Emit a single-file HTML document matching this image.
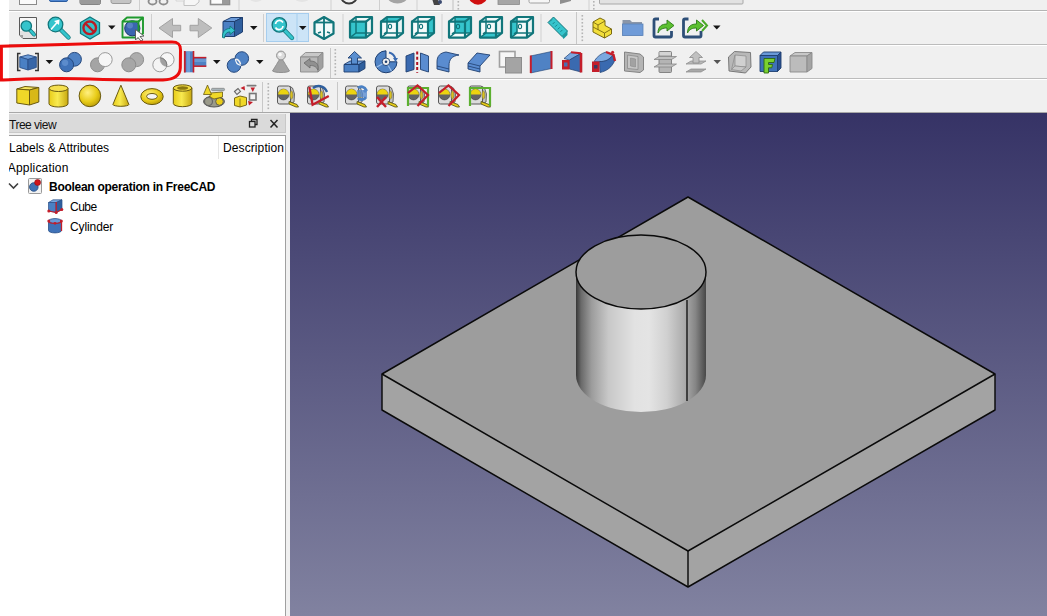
<!DOCTYPE html>
<html><head><meta charset="utf-8">
<style>
html,body{margin:0;padding:0;}
body{width:1047px;height:616px;overflow:hidden;position:relative;background:#ffffff;font-family:"Liberation Sans",sans-serif;}
.abs{position:absolute;}
#tb{position:absolute;left:9px;top:0;width:1038px;height:113px;background:#f0f0f0;}
.hl{position:absolute;left:0;width:1038px;height:1px;}
.vs{position:absolute;width:1px;background:#d0d0d0;}
.ic{position:absolute;}
.dd{position:absolute;width:0;height:0;border-left:4px solid transparent;border-right:4px solid transparent;border-top:4px solid #1a1a1a;}
.hd{position:absolute;width:2px;}
#view{position:absolute;left:290px;top:113px;width:757px;height:503px;background:linear-gradient(#363366,#8182a0);}
.tx{position:absolute;white-space:nowrap;color:#000;}
</style></head><body>
<div id="tb">
  <div class="hl" style="top:10px;background:#b4b4b4"></div>
  <div class="hl" style="top:11px;background:#ffffff"></div>
  <div class="hl" style="top:44px;background:#bcbcbc"></div>
  <div class="hl" style="top:45px;background:#ffffff"></div>
  <div class="hl" style="top:78px;background:#bcbcbc"></div>
  <div class="hl" style="top:79px;background:#ffffff"></div>
  <div class="hl" style="top:112px;background:#a8a8a8"></div>
</div>

<svg class="abs" style="left:0;top:0" width="1047" height="113" viewBox="0 0 1047 113"><rect x="19.5" y="-14" width="17" height="18.5" fill="#fafafa" stroke="#8a8a8a" stroke-width="1"/><rect x="49.5" y="-14" width="18" height="15.5" rx="1.5" fill="#4f86d0" stroke="#2a5ca0" stroke-width="1"/><rect x="80" y="-14" width="20.5" height="18.5" rx="2" fill="#909090" stroke="#6e6e6e" stroke-width="1"/><rect x="80" y="-4" width="20.5" height="8.5" rx="2" fill="#9a9a9a"/><rect x="111" y="-14" width="20" height="17.5" rx="2" fill="#c4c4c4" stroke="#9a9a9a" stroke-width="1"/><rect x="139" y="0" width="1" height="10" fill="#cfcfcf"/><ellipse cx="152.5" cy="1.5" rx="4" ry="3" fill="none" stroke="#8c8c8c" stroke-width="1.8"/><ellipse cx="163.5" cy="1.5" rx="4" ry="3" fill="none" stroke="#8c8c8c" stroke-width="1.8"/><polygon points="184,-12 199,-12 199,2 195,5.5 184,5.5" fill="#f6f6f6" stroke="#c2c2c2" stroke-width="1"/><polygon points="176,-6 184,-6 184,1 176,1" fill="#f2f2f2" stroke="#d0d0d0" stroke-width="0.8"/><rect x="210.5" y="-12" width="19" height="16.5" fill="#fbfbfb" stroke="#8e8e8e" stroke-width="1.6"/><rect x="222" y="-2" width="7" height="6" fill="#9a9a9a"/><rect x="238.5" y="0" width="1" height="10" fill="#cfcfcf"/><ellipse cx="256" cy="-3" rx="7" ry="5" fill="#e4e4e4"/><ellipse cx="302" cy="-3" rx="8" ry="5" fill="#e4e4e4"/><rect x="330.5" y="0" width="1" height="10" fill="#cfcfcf"/><circle cx="349" cy="-5" r="8.5" fill="none" stroke="#3a3a3a" stroke-width="1.8"/><rect x="379" y="0" width="1" height="10" fill="#cfcfcf"/><ellipse cx="397.5" cy="-3" rx="10" ry="6.5" fill="#a4a4a4"/><rect x="416.5" y="0" width="1" height="10" fill="#cfcfcf"/><polygon points="430,-8 437,-3 440,5 434,5" fill="#454545"/><circle cx="440" cy="2" r="2" fill="#3a4a70"/><rect x="452.5" y="0" width="1" height="10" fill="#c0c0c0"/><rect x="457.5" y="1" width="1.6" height="1.6" fill="#b4b4b4"/><rect x="457.5" y="4.5" width="1.6" height="1.6" fill="#b4b4b4"/><rect x="457.5" y="8.0" width="1.6" height="1.6" fill="#b4b4b4"/><circle cx="478" cy="-5" r="9.7" fill="#d01010"/><rect x="498" y="-14" width="21.5" height="18.5" fill="#a6a6a6" stroke="#8a8a8a" stroke-width="0.8"/><rect x="529" y="-14" width="20.5" height="17" rx="1.5" fill="#f6f6f6" stroke="#a0a0a0" stroke-width="1"/><polygon points="560,-10 571,-14 571,1 560,4" fill="#8e8e8e"/><rect x="588.5" y="0" width="1" height="10" fill="#cfcfcf"/><rect x="593" y="1" width="1.6" height="1.6" fill="#b4b4b4"/><rect x="593" y="4.5" width="1.6" height="1.6" fill="#b4b4b4"/><rect x="593" y="8.0" width="1.6" height="1.6" fill="#b4b4b4"/><rect x="599.5" y="-14" width="143.5" height="18" rx="1" fill="#e2e2e2" stroke="#a8a8a8" stroke-width="1"/><polygon points="19.5,17.5 36.5,17.5 36.5,38.5 23,38.5 19.5,35" fill="#f7f7f7" stroke="#5a5a5a" stroke-width="1"/><polygon points="20,31 36,31 36,38 23,38 20,35" fill="#e2e2e2"/><polygon points="19.5,35 23,35 23,38.5" fill="#a0a0a0"/><line x1="26.3" y1="26" x2="34" y2="34.5" stroke="#11767b" stroke-width="4.0" stroke-linecap="round"/><line x1="26.3" y1="26" x2="34" y2="34.5" stroke="#35c4cc" stroke-width="2.6" stroke-linecap="round"/><circle cx="26.3" cy="26" r="5.2" fill="#35c4cc" stroke="#11767b" stroke-width="1.3"/><line x1="55.5" y1="24.5" x2="68.5" y2="37.5" stroke="#11767b" stroke-width="4.4" stroke-linecap="round"/><line x1="55.5" y1="24.5" x2="68.5" y2="37.5" stroke="#35c4cc" stroke-width="3" stroke-linecap="round"/><circle cx="55.5" cy="24.5" r="7.3" fill="#35c4cc" stroke="#11767b" stroke-width="1.3"/><line x1="51" y1="29.5" x2="57.5" y2="22" stroke="#fff" stroke-width="1.6"/><polygon points="59.5,19.5 59,25 54,21" fill="#fff"/><polygon points="90.0,17.0 99.5,22.5 99.5,33.5 90.0,39.0 80.5,33.5 80.5,22.5" fill="#35c4cc" stroke="#11767b" stroke-width="1.3"/><circle cx="89.7" cy="27.8" r="6.3" fill="none" stroke="#b81c24" stroke-width="2.4"/><line x1="85.5" y1="23.5" x2="94" y2="32" stroke="#b81c24" stroke-width="2.4"/><polygon points="108,25.5 115.5,25.5 111.75,29.5" fill="#151515"/><circle cx="132.3" cy="28.3" r="7.6" fill="#3a66b0" stroke="#1c3a70" stroke-width="1"/><circle cx="130" cy="25.5" r="3" fill="#6a92d0" opacity="0.6"/><polygon points="122.5,21.5 138.5,21.5 138.5,37.5 122.5,37.5" fill="none" stroke="#1f9a2e" stroke-width="1.9" stroke-linejoin="round"/><polyline points="122.5,21.5 127,17.5 143,17.5 143,33.5 138.5,37.5" fill="none" stroke="#1f9a2e" stroke-width="1.9" stroke-linejoin="round"/><line x1="138.5" y1="21.5" x2="143" y2="17.5" stroke="#1f9a2e" stroke-width="1.9"/><polygon points="135.5,29.5 144,36 140,36.5 143,40 141,41 138,37.5 135.5,40" fill="#fff" stroke="#555" stroke-width="0.9"/><rect x="151" y="14" width="1" height="28" fill="#cfcfcf"/><polygon points="159,28 172.5,18.5 172.5,25.3 180.7,25.3 180.7,30.8 172.5,30.8 172.5,37.5" fill="#bdbdbd" stroke="#a2a2a2" stroke-width="1"/><polygon points="211.8,28 198.3,18.5 198.3,25.3 190,25.3 190,30.8 198.3,30.8 198.3,37.5" fill="#bdbdbd" stroke="#a2a2a2" stroke-width="1"/><polygon points="223,21.5 234.5,21.5 234.5,36.5 223,36.5" fill="#4a80c4" stroke="#1f3f70" stroke-width="1"/><polygon points="223,21.5 231,17.5 242.5,17.5 234.5,21.5" fill="#6a9ad8" stroke="#1f3f70" stroke-width="1"/><polygon points="234.5,21.5 242.5,17.5 242.5,32 234.5,36.5" fill="#2f5f9e" stroke="#1f3f70" stroke-width="1"/><path d="M222.5,37.5 C222,31 226,28.5 230,28.5 L230,26 L235,30.5 L230,34.5 L230,32 C227,32 225,33.5 224.5,38 Z" fill="#35c4cc" stroke="#11767b" stroke-width="0.9"/><polygon points="250,26 257.5,26 253.75,30" fill="#151515"/><rect x="263" y="14" width="1" height="28" fill="#cfcfcf"/><rect x="266.5" y="13.5" width="42" height="28" fill="#cce4f7" stroke="#a6cdee" stroke-width="1"/><rect x="296.5" y="14" width="1" height="27" fill="#a6cdee"/><line x1="279.3" y1="24.9" x2="292" y2="38" stroke="#11767b" stroke-width="4.4" stroke-linecap="round"/><line x1="279.3" y1="24.9" x2="292" y2="38" stroke="#35c4cc" stroke-width="3" stroke-linecap="round"/><circle cx="279.3" cy="24.9" r="7.2" fill="#35c4cc" stroke="#11767b" stroke-width="1.3"/><path d="M275.5,24 A4,4 0 0 1 283,22.5" fill="none" stroke="#fff" stroke-width="1.6"/><path d="M283,26 A4,4 0 0 1 275.5,27.5" fill="none" stroke="#fff" stroke-width="1.6"/><polygon points="299,26 306.5,26 302.75,30" fill="#151515"/><polygon points="324.0,17.0 333.5,22.5 333.5,33.5 324.0,39.0 314.5,33.5 314.5,22.5" fill="#f2fafa" stroke="#11767b" stroke-width="2.2" stroke-linejoin="round"/><polyline points="314.5,22.5 324.0,22.5 333.5,22.5" fill="none" stroke="#11767b" stroke-width="1.8"/><line x1="324" y1="17" x2="324" y2="39" stroke="#11767b" stroke-width="1.8"/><line x1="318" y1="33" x2="321" y2="32" stroke="#11767b" stroke-width="1.6"/><line x1="327" y1="32" x2="330" y2="33" stroke="#11767b" stroke-width="1.6"/><rect x="342.5" y="14" width="1" height="28" fill="#cfcfcf"/><polygon points="350.0,21.6 366.0,21.6 366.0,37.6 350.0,37.6" fill="#f4fbfb"/><polygon points="350.0,21.6 366.0,21.6 372.0,17.0 356.0,17.0" fill="#eef8f8"/><polygon points="366.0,21.6 372.0,17.0 372.0,33.0 366.0,37.6" fill="#e8f4f4"/><polygon points="350.0,21.6 366.0,21.6 366.0,37.6 350.0,37.6" fill="#35c4cc"/><polyline points="350.0,21.6 356.0,17.0 372.0,17.0 372.0,33.0 366.0,37.6" fill="none" stroke="#11767b" stroke-width="2.2" stroke-linejoin="round"/><polygon points="350.0,21.6 366.0,21.6 366.0,37.6 350.0,37.6" fill="none" stroke="#11767b" stroke-width="2.2" stroke-linejoin="round"/><line x1="366" y1="21.6" x2="372" y2="17.0" fill="none" stroke="#11767b" stroke-width="2.2" stroke-linejoin="round"/><polyline points="356,17.0 356,33.0 372,33.0" fill="none" stroke="#11767b" stroke-width="1.5"/><line x1="350" y1="37.6" x2="356" y2="33.0" fill="none" stroke="#11767b" stroke-width="1.5"/><polygon points="381.0,21.6 397.0,21.6 397.0,37.6 381.0,37.6" fill="#f4fbfb"/><polygon points="381.0,21.6 397.0,21.6 403.0,17.0 387.0,17.0" fill="#eef8f8"/><polygon points="397.0,21.6 403.0,17.0 403.0,33.0 397.0,37.6" fill="#e8f4f4"/><polygon points="381.0,21.6 397.0,21.6 403.0,17.0 387.0,17.0" fill="#35c4cc"/><polyline points="381.0,21.6 387.0,17.0 403.0,17.0 403.0,33.0 397.0,37.6" fill="none" stroke="#11767b" stroke-width="2.2" stroke-linejoin="round"/><polygon points="381.0,21.6 397.0,21.6 397.0,37.6 381.0,37.6" fill="none" stroke="#11767b" stroke-width="2.2" stroke-linejoin="round"/><line x1="397" y1="21.6" x2="403" y2="17.0" fill="none" stroke="#11767b" stroke-width="2.2" stroke-linejoin="round"/><polyline points="387,17.0 387,33.0 403,33.0" fill="none" stroke="#11767b" stroke-width="1.5"/><line x1="381" y1="37.6" x2="387" y2="33.0" fill="none" stroke="#11767b" stroke-width="1.5"/><line x1="384" y1="34" x2="387" y2="32" stroke="#11767b" stroke-width="1.6"/><ellipse cx="390" cy="26.5" rx="1.6" ry="2.2" fill="none" stroke="#11767b" stroke-width="1.1"/><polygon points="412.0,21.6 428.0,21.6 428.0,37.6 412.0,37.6" fill="#f4fbfb"/><polygon points="412.0,21.6 428.0,21.6 434.0,17.0 418.0,17.0" fill="#eef8f8"/><polygon points="428.0,21.6 434.0,17.0 434.0,33.0 428.0,37.6" fill="#e8f4f4"/><polygon points="428.0,21.6 434.0,17.0 434.0,33.0 428.0,37.6" fill="#35c4cc"/><polyline points="412.0,21.6 418.0,17.0 434.0,17.0 434.0,33.0 428.0,37.6" fill="none" stroke="#11767b" stroke-width="2.2" stroke-linejoin="round"/><polygon points="412.0,21.6 428.0,21.6 428.0,37.6 412.0,37.6" fill="none" stroke="#11767b" stroke-width="2.2" stroke-linejoin="round"/><line x1="428" y1="21.6" x2="434" y2="17.0" fill="none" stroke="#11767b" stroke-width="2.2" stroke-linejoin="round"/><polyline points="418,17.0 418,33.0 434,33.0" fill="none" stroke="#11767b" stroke-width="1.5"/><line x1="412" y1="37.6" x2="418" y2="33.0" fill="none" stroke="#11767b" stroke-width="1.5"/><line x1="415" y1="34" x2="418" y2="32" stroke="#11767b" stroke-width="1.6"/><ellipse cx="421" cy="26.5" rx="1.6" ry="2.2" fill="none" stroke="#11767b" stroke-width="1.1"/><rect x="441.5" y="14" width="1" height="28" fill="#cfcfcf"/><polygon points="449.0,21.6 465.0,21.6 465.0,37.6 449.0,37.6" fill="#f4fbfb"/><polygon points="449.0,21.6 465.0,21.6 471.0,17.0 455.0,17.0" fill="#eef8f8"/><polygon points="465.0,21.6 471.0,17.0 471.0,33.0 465.0,37.6" fill="#e8f4f4"/><polygon points="455.0,17.0 471.0,17.0 471.0,33.0 455.0,33.0" fill="#35c4cc"/><polyline points="449.0,21.6 455.0,17.0 471.0,17.0 471.0,33.0 465.0,37.6" fill="none" stroke="#11767b" stroke-width="2.2" stroke-linejoin="round"/><polygon points="449.0,21.6 465.0,21.6 465.0,37.6 449.0,37.6" fill="none" stroke="#11767b" stroke-width="2.2" stroke-linejoin="round"/><line x1="465" y1="21.6" x2="471" y2="17.0" fill="none" stroke="#11767b" stroke-width="2.2" stroke-linejoin="round"/><polyline points="455,17.0 455,33.0 471,33.0" fill="none" stroke="#11767b" stroke-width="1.5"/><line x1="449" y1="37.6" x2="455" y2="33.0" fill="none" stroke="#11767b" stroke-width="1.5"/><line x1="452" y1="34" x2="455" y2="32" stroke="#11767b" stroke-width="1.6"/><ellipse cx="458" cy="26.5" rx="1.6" ry="2.2" fill="none" stroke="#11767b" stroke-width="1.1"/><polygon points="480.0,21.6 496.0,21.6 496.0,37.6 480.0,37.6" fill="#f4fbfb"/><polygon points="480.0,21.6 496.0,21.6 502.0,17.0 486.0,17.0" fill="#eef8f8"/><polygon points="496.0,21.6 502.0,17.0 502.0,33.0 496.0,37.6" fill="#e8f4f4"/><polygon points="480.0,37.6 496.0,37.6 502.0,33.0 486.0,33.0" fill="#35c4cc"/><polyline points="480.0,21.6 486.0,17.0 502.0,17.0 502.0,33.0 496.0,37.6" fill="none" stroke="#11767b" stroke-width="2.2" stroke-linejoin="round"/><polygon points="480.0,21.6 496.0,21.6 496.0,37.6 480.0,37.6" fill="none" stroke="#11767b" stroke-width="2.2" stroke-linejoin="round"/><line x1="496" y1="21.6" x2="502" y2="17.0" fill="none" stroke="#11767b" stroke-width="2.2" stroke-linejoin="round"/><polyline points="486,17.0 486,33.0 502,33.0" fill="none" stroke="#11767b" stroke-width="1.5"/><line x1="480" y1="37.6" x2="486" y2="33.0" fill="none" stroke="#11767b" stroke-width="1.5"/><line x1="483" y1="34" x2="486" y2="32" stroke="#11767b" stroke-width="1.6"/><ellipse cx="489" cy="26.5" rx="1.6" ry="2.2" fill="none" stroke="#11767b" stroke-width="1.1"/><polygon points="511.0,21.6 527.0,21.6 527.0,37.6 511.0,37.6" fill="#f4fbfb"/><polygon points="511.0,21.6 527.0,21.6 533.0,17.0 517.0,17.0" fill="#eef8f8"/><polygon points="527.0,21.6 533.0,17.0 533.0,33.0 527.0,37.6" fill="#e8f4f4"/><polygon points="511.0,21.6 517.0,17.0 517.0,33.0 511.0,37.6" fill="#35c4cc"/><polyline points="511.0,21.6 517.0,17.0 533.0,17.0 533.0,33.0 527.0,37.6" fill="none" stroke="#11767b" stroke-width="2.2" stroke-linejoin="round"/><polygon points="511.0,21.6 527.0,21.6 527.0,37.6 511.0,37.6" fill="none" stroke="#11767b" stroke-width="2.2" stroke-linejoin="round"/><line x1="527" y1="21.6" x2="533" y2="17.0" fill="none" stroke="#11767b" stroke-width="2.2" stroke-linejoin="round"/><polyline points="517,17.0 517,33.0 533,33.0" fill="none" stroke="#11767b" stroke-width="1.5"/><line x1="511" y1="37.6" x2="517" y2="33.0" fill="none" stroke="#11767b" stroke-width="1.5"/><line x1="514" y1="34" x2="517" y2="32" stroke="#11767b" stroke-width="1.6"/><ellipse cx="520" cy="26.5" rx="1.6" ry="2.2" fill="none" stroke="#11767b" stroke-width="1.1"/><rect x="540.5" y="14" width="1" height="28" fill="#cfcfcf"/><polygon points="548,22.5 553.5,17 567.5,31 562,36.5" fill="#35c4cc" stroke="#11767b" stroke-width="1"/><polygon points="562,36.5 567.5,31 567.5,35 563.5,39" fill="#1a9aa0"/><line x1="552.0" y1="19.5" x2="550.0" y2="21.5" stroke="#11767b" stroke-width="0.8"/><line x1="554.6" y1="22.1" x2="552.6" y2="24.1" stroke="#11767b" stroke-width="0.8"/><line x1="557.2" y1="24.7" x2="555.2" y2="26.7" stroke="#11767b" stroke-width="0.8"/><line x1="559.8" y1="27.3" x2="557.8" y2="29.3" stroke="#11767b" stroke-width="0.8"/><line x1="562.4" y1="29.9" x2="560.4" y2="31.9" stroke="#11767b" stroke-width="0.8"/><rect x="576" y="12" width="1" height="32" fill="#c8c8c8"/><rect x="581.5" y="15" width="1.6" height="1.6" fill="#b4b4b4"/><rect x="581.5" y="18.5" width="1.6" height="1.6" fill="#b4b4b4"/><rect x="581.5" y="22.0" width="1.6" height="1.6" fill="#b4b4b4"/><rect x="581.5" y="25.5" width="1.6" height="1.6" fill="#b4b4b4"/><rect x="581.5" y="29.0" width="1.6" height="1.6" fill="#b4b4b4"/><rect x="581.5" y="32.5" width="1.6" height="1.6" fill="#b4b4b4"/><rect x="581.5" y="36.0" width="1.6" height="1.6" fill="#b4b4b4"/><rect x="581.5" y="39.5" width="1.6" height="1.6" fill="#b4b4b4"/><polygon points="593,22 600,18 605,20.5 605,25.5 611.5,29 611.5,34 604.5,38 593,32" fill="#f2de3a" stroke="#7a6a10" stroke-width="1"/><polyline points="593,27 604.5,33 611.5,29" fill="none" stroke="#7a6a10" stroke-width="0.9"/><polyline points="593,22 598,25 605,21" fill="none" stroke="#7a6a10" stroke-width="0.9"/><line x1="598" y1="25" x2="598" y2="30" stroke="#7a6a10" stroke-width="0.9"/><line x1="604.5" y1="33" x2="604.5" y2="38" stroke="#7a6a10" stroke-width="0.9"/><path d="M622.5,20 L630,20 L632,22 L642,22 L642,35.5 L622.5,35.5 Z" fill="#8a96a8"/><rect x="622.5" y="24" width="20.5" height="11.5" fill="#6f9bd8" stroke="#5a82b8" stroke-width="0.8"/><path d="M659,19 L655.5,19 Q654,19 654,20.5 L654,35.5 Q654,37 655.5,37 L670,37 Q671.5,37 671.5,35.5 L671.5,31" fill="none" stroke="#2e4f78" stroke-width="2.8"/><path d="M658,33 C658,26 662,24 667,24 L667,20 L674,25.5 L667,31 L667,28 C663,28 660,29 658,33 Z" fill="#5cc030" stroke="#2c7a18" stroke-width="0.9"/><path d="M688.5,19 L685.0,19 Q683.5,19 683.5,20.5 L683.5,35.5 Q683.5,37 685.0,37 L699.5,37 Q701.0,37 701.0,35.5 L701.0,31" fill="none" stroke="#2e4f78" stroke-width="2.8"/><path d="M687.5,33 C687.5,26 691.5,24 696.5,24 L696.5,20 L703.5,25.5 L696.5,31 L696.5,28 C692.5,28 689.5,29 687.5,33 Z" fill="#5cc030" stroke="#2c7a18" stroke-width="0.9"/><polyline points="702,20 707,25.5 702,31" fill="none" stroke="#4aaa28" stroke-width="2"/><polygon points="713,25.5 720.5,25.5 716.75,29.5" fill="#151515"/><polyline points="20.5,53.5 17.7,53.5 17.7,70.5 20.5,70.5" fill="none" stroke="#333" stroke-width="1.5"/><polyline points="35,53.5 38.2,53.5 38.2,70.5 35,70.5" fill="none" stroke="#333" stroke-width="1.5"/><polygon points="19.8,57 28,54.8 36.3,57 28,59.5" fill="#6c9cd8" stroke="#2a4f88" stroke-width="0.9"/><polygon points="19.8,57 28,59.5 28,70 19.8,67.5" fill="#4a80c4" stroke="#2a4f88" stroke-width="0.9"/><polygon points="28,59.5 36.3,57 36.3,67.5 28,70" fill="#3766a8" stroke="#2a4f88" stroke-width="0.9"/><polygon points="45.6,60 53.1,60 49.35,64" fill="#151515"/><circle cx="74.5" cy="59.3" r="6.9" fill="#4f82c4" stroke="#26497e" stroke-width="1"/><circle cx="66.6" cy="64.8" r="7" fill="#3f72b8" stroke="#26497e" stroke-width="1"/><circle cx="65.1" cy="62.8" r="3.15" fill="#7aa6e0" opacity="0.5"/><circle cx="97.5" cy="64.8" r="7" fill="#a4a4a4" stroke="#8c8c8c" stroke-width="1"/><circle cx="105.2" cy="59.6" r="7" fill="#f6f6f6" stroke="#9a9a9a" stroke-width="1"/><circle cx="136.6" cy="59.6" r="7" fill="#adadad" stroke="#8c8c8c" stroke-width="1"/><circle cx="128.8" cy="64.8" r="7" fill="#a6a6a6" stroke="#8c8c8c" stroke-width="1"/><circle cx="167.1" cy="59.6" r="7" fill="#f7f7f7" stroke="#9c9c9c" stroke-width="1"/><circle cx="159.8" cy="64.8" r="7" fill="#f7f7f7" fill-opacity="0.6" stroke="#9c9c9c" stroke-width="1"/><clipPath id="cpc"><circle cx="167.1" cy="59.6" r="7"/></clipPath><circle cx="159.8" cy="64.8" r="7" fill="#a0a0a0" clip-path="url(#cpc)" stroke="#7a7a7a" stroke-width="1"/><rect x="184" y="51.3" width="9.5" height="21" fill="#4f82c4"/><rect x="193.5" y="57.5" width="12.8" height="8.8" fill="#4f82c4"/><rect x="186.5" y="52" width="3.5" height="20" fill="#7aa8e0" opacity="0.7"/><rect x="194" y="59" width="12" height="3" fill="#7aa8e0" opacity="0.6"/><line x1="184.8" y1="51" x2="184.8" y2="72.5" stroke="#c41e2a" stroke-width="1.8"/><line x1="193.5" y1="51" x2="193.5" y2="72.5" stroke="#c41e2a" stroke-width="1.6"/><line x1="193.5" y1="57.6" x2="206.3" y2="57.6" stroke="#c41e2a" stroke-width="1.5"/><line x1="193.5" y1="66.2" x2="206.3" y2="66.2" stroke="#c41e2a" stroke-width="1.5"/><polygon points="213,60 220.5,60 216.75,64" fill="#151515"/><circle cx="241.8" cy="58.5" r="6.8" fill="#4f82c4" stroke="#26497e" stroke-width="1"/><circle cx="234" cy="65.5" r="6.8" fill="#4f82c4" stroke="#26497e" stroke-width="1"/><path d="M236.2,59 A6.8,6.8 0 0 1 240.5,64.6" fill="none" stroke="#f4f4f4" stroke-width="1.5"/><path d="M235.5,58.8 A6.8,6.8 0 0 0 240.8,65.5" fill="none" stroke="#f4f4f4" stroke-width="1.2"/><polygon points="256,60 263.5,60 259.75,64" fill="#151515"/><path d="M281,57 C284,62 287,67 289.5,71 C287,73 275,73 272.5,71 C275,67 278,62 281,57 Z" fill="#a4a4a4" stroke="#8a8a8a" stroke-width="0.9"/><circle cx="281" cy="55.5" r="4.4" fill="#dcdcdc" stroke="#8e8e8e" stroke-width="1"/><circle cx="280" cy="54.5" r="1.8" fill="#fafafa"/><polygon points="300.5,57 305.5,52.5 323,52.5 318,57" fill="#c8c8c8" stroke="#8a8a8a" stroke-width="0.9"/><polygon points="300.5,57 318,57 318,72 300.5,72" fill="#b8b8b8" stroke="#8a8a8a" stroke-width="0.9"/><polygon points="318,57 323,52.5 323,67.5 318,72" fill="#a0a0a0" stroke="#8a8a8a" stroke-width="0.9"/><path d="M304,63 L310,58.5 L310,61 C316,61 319,64 318,70 C316,66.5 314,65.5 310,65.5 L310,68 Z" fill="#909090" stroke="#6a6a6a" stroke-width="0.8"/><rect x="330" y="48" width="1" height="30" fill="#c8c8c8"/><rect x="334.5" y="49" width="1.6" height="1.6" fill="#b4b4b4"/><rect x="334.5" y="52.5" width="1.6" height="1.6" fill="#b4b4b4"/><rect x="334.5" y="56.0" width="1.6" height="1.6" fill="#b4b4b4"/><rect x="334.5" y="59.5" width="1.6" height="1.6" fill="#b4b4b4"/><rect x="334.5" y="63.0" width="1.6" height="1.6" fill="#b4b4b4"/><rect x="334.5" y="66.5" width="1.6" height="1.6" fill="#b4b4b4"/><rect x="334.5" y="70.0" width="1.6" height="1.6" fill="#b4b4b4"/><rect x="334.5" y="73.5" width="1.6" height="1.6" fill="#b4b4b4"/><polygon points="344,64.5 350,61 365,61 359,64.5" fill="#6c9cd8" stroke="#1f3f70" stroke-width="0.9"/><polygon points="344,64.5 359,64.5 359,72 344,72" fill="#4a80c4" stroke="#1f3f70" stroke-width="0.9"/><polygon points="359,64.5 365,61 365,68.5 359,72" fill="#2f5f9e" stroke="#1f3f70" stroke-width="0.9"/><polygon points="354.5,51.5 361.5,58 357.5,58 357.5,64 351.5,64 351.5,58 348,58" fill="#5a8fd0" stroke="#1f3f70" stroke-width="0.9"/><path d="M386,61.8 L397,61.8 A11,11 0 1 1 386,50.8 Z" fill="#4f82c4" stroke="#1f3f70" stroke-width="1"/><line x1="386" y1="61.8" x2="376.5" y2="67.3" stroke="#9cc0ec" stroke-width="1.2"/><line x1="386" y1="61.8" x2="391.5" y2="71.3" stroke="#9cc0ec" stroke-width="1.2"/><circle cx="386" cy="61.8" r="3.8" fill="#f0f0f0" stroke="#1f3f70" stroke-width="0.9"/><circle cx="386" cy="61.8" r="1.3" fill="#1f3f70"/><path d="M389,52.5 A9,9 0 0 1 395.5,59" fill="none" stroke="#3a6ab0" stroke-width="2"/><polygon points="393,58 398,58 395.5,62" fill="#3a6ab0"/><polygon points="406,56 414,53 414,69.5 406,72" fill="#3a6ab0" stroke="#1f3f70" stroke-width="0.9"/><polygon points="420.5,53 428.5,56 428.5,72 420.5,69.5" fill="#5a8cd0" stroke="#1f3f70" stroke-width="0.9"/><line x1="417.2" y1="51.5" x2="417.2" y2="73" stroke="#b01020" stroke-width="2" stroke-dasharray="3,2.2"/><path d="M437,62 C437,56 440,53 446,52 L459,55 C452,56 449,59 449,66 L449,72 L437,69 Z" fill="#5a8cd0" stroke="#1f3f70" stroke-width="0.9"/><line x1="437" y1="66" x2="449" y2="69" stroke="#1f3f70" stroke-width="0.8"/><path d="M468,63 L477,53 L490,55 L480,66 L480,72 L468,69 Z" fill="#5a8cd0" stroke="#1f3f70" stroke-width="0.9"/><line x1="468" y1="66" x2="480" y2="69" stroke="#1f3f70" stroke-width="0.8"/><line x1="480" y1="66" x2="468" y2="63" stroke="#1f3f70" stroke-width="0.8"/><rect x="499.5" y="51.5" width="15.5" height="15.5" fill="#f6f6f6" stroke="#a0a0a0" stroke-width="1.6"/><rect x="505.5" y="57.5" width="16" height="15.5" fill="#a4a4a4" stroke="#8c8c8c" stroke-width="1"/><polygon points="530.5,56 551.5,51.5 551.5,68.5 530.5,73" fill="#4f82c4" stroke="#1f3f70" stroke-width="0.6"/><line x1="530.8" y1="55.5" x2="530.8" y2="73" stroke="#c41e2a" stroke-width="2"/><line x1="551.5" y1="51" x2="551.5" y2="69" stroke="#c41e2a" stroke-width="2"/><polygon points="564,58.5 571,52.5 581,53.5 569.5,60" fill="#7aa8e0" stroke="#1f3f70" stroke-width="0.7"/><polygon points="569.5,60 581,53.5 581,72 569.5,69" fill="#3a6ab0" stroke="#1f3f70" stroke-width="0.7"/><polygon points="562,60 569.5,60 569.5,69.5 562,69.5" fill="#c41e2a"/><rect x="564" y="62.5" width="3.5" height="4" fill="#4a70b0"/><line x1="581" y1="53" x2="581" y2="72.5" stroke="#c41e2a" stroke-width="2.6"/><line x1="571" y1="52.2" x2="581" y2="53.2" stroke="#c41e2a" stroke-width="2"/><path d="M594,61.5 C597,56.5 601,53.5 606,52 L613,55 C610,59 606,62 599.5,61.5 Z" fill="#7aa8e0" stroke="#1f3f70" stroke-width="0.7"/><path d="M599.5,61.5 C606,62 610,59 613,55 L614.5,61 C612,67 607,71 600,72.5 Z" fill="#3a6ab0" stroke="#1f3f70" stroke-width="0.7"/><rect x="592" y="61.5" width="7.5" height="10.5" fill="#c41e2a"/><rect x="594" y="65" width="3.5" height="3.5" fill="#3a3a60"/><polyline points="606,52 613.5,55 615,61" fill="none" stroke="#c41e2a" stroke-width="2.4"/><circle cx="612.6" cy="52.3" r="1.5" fill="#c41e2a"/><polygon points="624.5,52 640,54 643.5,57 643.5,70 640,72.5 624.5,71" fill="#b4b4b4" stroke="#7a7a7a" stroke-width="0.9"/><polygon points="627.5,55 638,56.5 638,69.5 627.5,68.5" fill="#c6c6c6" stroke="#8a8a8a" stroke-width="0.8"/><polygon points="630.5,58 635.5,59 635.5,67 630.5,66" fill="#a2a2a2" stroke="#8a8a8a" stroke-width="0.6"/><rect x="659" y="51.5" width="12.5" height="21" rx="1" fill="#b4b4b4" stroke="#7a7a7a" stroke-width="0.9"/><rect x="659.5" y="52" width="11.5" height="3" fill="#d4d4d4"/><polygon points="654,59.5 659,56.5 676.5,56.5 671.5,59.5" fill="#c0c0c0" stroke="#808080" stroke-width="0.7"/><polygon points="654,67 659,64 676.5,64 671.5,67" fill="#c0c0c0" stroke="#808080" stroke-width="0.7"/><polygon points="686,72 691,69 706,69 701,72" fill="#a8a8a8" stroke="#8a8a8a" stroke-width="0.7"/><polygon points="686,64 691,61 706,61 701,64" fill="#b8b8b8" stroke="#8a8a8a" stroke-width="0.7"/><polygon points="696,51.5 702.5,57.5 699,57.5 699,63 693,63 693,57.5 689.5,57.5" fill="#c0c0c0" stroke="#8a8a8a" stroke-width="0.8"/><polygon points="713.5,60 721.0,60 717.25,64" fill="#555"/><polygon points="728.5,57 734.5,51.5 750.5,52.5 751,67 745.5,73 729,71" fill="#b8b8b8" stroke="#6e6e6e" stroke-width="0.9"/><polygon points="735,55 746,56 746,67 735,66" fill="#d0d0d0" stroke="#8a8a8a" stroke-width="0.7"/><polygon points="735,66 746,67 741,71 731.5,69.5" fill="#c8c8c8" stroke="#8a8a8a" stroke-width="0.7"/><line x1="735" y1="55" x2="731.5" y2="69.5" stroke="#8a8a8a" stroke-width="0.7"/><polygon points="760,55.5 763.5,52 781,52 777.5,55.5" fill="#6a9ad8" stroke="#1f3f70" stroke-width="0.9"/><polygon points="760,55.5 777.5,55.5 777.5,71.5 760,71.5" fill="#3f72b8" stroke="#1f3f70" stroke-width="0.9"/><polygon points="777.5,55.5 781,52 781,68 777.5,71.5" fill="#2a5090" stroke="#1f3f70" stroke-width="0.9"/><path d="M764,58.5 L775,58.5 L774,62.5 L768.5,62.5 L768.5,64.5 L772.5,64.5 L771.8,67.8 L768.5,67.8 L768.5,73 L764,73 Z" fill="#7ad030" stroke="#2e6a10" stroke-width="0.9"/><polygon points="790,56 795,52.5 812,52.5 807,56" fill="#c8c8c8" stroke="#8a8a8a" stroke-width="0.9"/><polygon points="790,56 807,56 807,72 790,72" fill="#bcbcbc" stroke="#8a8a8a" stroke-width="0.9"/><polygon points="807,56 812,52.5 812,68.5 807,72" fill="#a4a4a4" stroke="#8a8a8a" stroke-width="0.9"/><defs><linearGradient id="yg" x1="0" x2="1"><stop offset="0" stop-color="#e8cc18"/><stop offset="0.45" stop-color="#f8ea50"/><stop offset="1" stop-color="#c8a810"/></linearGradient><radialGradient id="ysph" cx="0.4" cy="0.35" r="0.7"><stop offset="0" stop-color="#fff080"/><stop offset="0.6" stop-color="#e8cc18"/><stop offset="1" stop-color="#b89a08"/></radialGradient></defs><polygon points="16.8,89 25,86.5 38.8,87.5 29.5,90" fill="#f6e660" stroke="#6a5a10" stroke-width="1"/><polygon points="16.8,89 29.5,90 29.5,105 16.8,103" fill="#f0d828" stroke="#6a5a10" stroke-width="1"/><polygon points="29.5,90 38.8,87.5 38.8,102 29.5,105" fill="#d8b818" stroke="#6a5a10" stroke-width="1"/><path d="M49,88.3 L49,103.8 A9.5,3.2 0 0 0 68,103.8 L68,88.3 Z" fill="url(#yg)" stroke="#6a5a10" stroke-width="1"/><ellipse cx="58.5" cy="88.3" rx="9.5" ry="3.2" fill="#f4e050" stroke="#6a5a10" stroke-width="1"/><circle cx="89.9" cy="95.9" r="10.8" fill="url(#ysph)" stroke="#6a5a10" stroke-width="1"/><path d="M120.9,85.2 L128.9,104.5 A8,1.8 0 0 1 112.9,104.5 Z" fill="url(#yg)" stroke="#6a5a10" stroke-width="1"/><ellipse cx="152" cy="96.6" rx="11.2" ry="8" fill="url(#ysph)" stroke="#6a5a10" stroke-width="1"/><ellipse cx="152" cy="96.4" rx="5.4" ry="2.9" fill="#f4f4f4" stroke="#6a5a10" stroke-width="1"/><path d="M173.3,88 L173.3,103.5 A9.3,3.2 0 0 0 191.9,103.5 L191.9,88 Z" fill="url(#yg)" stroke="#6a5a10" stroke-width="1"/><ellipse cx="182.6" cy="88" rx="9.3" ry="3.2" fill="#f2dc40" stroke="#6a5a10" stroke-width="1"/><ellipse cx="182.6" cy="88" rx="5.5" ry="1.8" fill="#8a7810"/><ellipse cx="214" cy="101.5" rx="10.5" ry="5.5" fill="#9a9a8a" stroke="#555" stroke-width="1"/><ellipse cx="208.5" cy="101.5" rx="4" ry="4" fill="none" stroke="#666" stroke-width="1.2"/><circle cx="219.5" cy="101.5" r="3.8" fill="#e8cc18" stroke="#555" stroke-width="0.9"/><polygon points="210,93 222.5,92 222.5,97 214,99 210,97" fill="#f0d828" stroke="#6a5a10" stroke-width="0.8"/><polygon points="207.5,85 211.5,94.5 203.5,94.5" fill="#f0d828" stroke="#6a5a10" stroke-width="0.8"/><rect x="211.5" y="88.3" width="13" height="2.4" rx="1" fill="#a8b4b8" stroke="#707070" stroke-width="0.6"/><polygon points="234.5,98 240,96 246.5,97.5 246.5,105 240,107 234.5,105.5" fill="#f0d828" stroke="#6a5a10" stroke-width="0.9"/><line x1="240" y1="98.5" x2="240" y2="107" stroke="#6a5a10" stroke-width="0.7"/><polygon points="234.5,91.5 238,88.5 240.5,91.5 237,94.5" fill="#e8e8e8" stroke="#666" stroke-width="1.1"/><rect x="249.5" y="93.5" width="6.5" height="6.5" fill="#f4f4f4" stroke="#777" stroke-width="1.6"/><rect x="246.5" y="84.8" width="10" height="1.8" rx="0.8" fill="#7a7a7a"/><polygon points="250.5,87.5 255,87.5 252.8,92" fill="#c41e2a"/><polygon points="240.5,88 244.5,86 245,90.5" fill="#c41e2a"/><polygon points="248,101 253,102 249,105.5" fill="#c41e2a"/><rect x="262" y="82" width="1" height="30" fill="#c8c8c8"/><rect x="267.5" y="83" width="1.6" height="1.6" fill="#b4b4b4"/><rect x="267.5" y="86.5" width="1.6" height="1.6" fill="#b4b4b4"/><rect x="267.5" y="90.0" width="1.6" height="1.6" fill="#b4b4b4"/><rect x="267.5" y="93.5" width="1.6" height="1.6" fill="#b4b4b4"/><rect x="267.5" y="97.0" width="1.6" height="1.6" fill="#b4b4b4"/><rect x="267.5" y="100.5" width="1.6" height="1.6" fill="#b4b4b4"/><rect x="267.5" y="104.0" width="1.6" height="1.6" fill="#b4b4b4"/><rect x="267.5" y="107.5" width="1.6" height="1.6" fill="#b4b4b4"/><polygon points="290,86.5 292.5,88 294.5,94 294,102 290,104" fill="#c4c4c4" stroke="#5a5a5a" stroke-width="0.9"/><rect x="277.5" y="86" width="13" height="18" rx="2" fill="#dcdcdc" stroke="#5a5a5a" stroke-width="1"/><circle cx="283.5" cy="94.5" r="5.4" fill="#646464" stroke="#3a3a3a" stroke-width="0.6"/><path d="M278.1,94.5 A5.4,5.4 0 0 1 288.9,94.5 Z" fill="#ecd410"/><ellipse cx="291.5" cy="95" rx="1.6" ry="4" fill="#d8c020" stroke="#6a6a6a" stroke-width="0.6"/><polygon points="289,101.5 297,104.5 298.5,107 296,107 289,104" fill="#e8cc18" stroke="#4a4a10" stroke-width="0.8"/><polygon points="320,86.5 322.5,88 324.5,94 324,102 320,104" fill="#c4c4c4" stroke="#5a5a5a" stroke-width="0.9"/><rect x="307.5" y="86" width="13" height="18" rx="2" fill="#dcdcdc" stroke="#5a5a5a" stroke-width="1"/><circle cx="313.5" cy="94.5" r="5.4" fill="#646464" stroke="#3a3a3a" stroke-width="0.6"/><path d="M308.1,94.5 A5.4,5.4 0 0 1 318.9,94.5 Z" fill="#ecd410"/><ellipse cx="321.5" cy="95" rx="1.6" ry="4" fill="#d8c020" stroke="#6a6a6a" stroke-width="0.6"/><polygon points="319,101.5 327,104.5 328.5,107 326,107 319,104" fill="#e8cc18" stroke="#4a4a10" stroke-width="0.8"/><path d="M313,88 C317,85 324,85 327,92" fill="none" stroke="#2f5f9e" stroke-width="2.4"/><polyline points="309.3,86.7 312.6,104.8 328.8,95.9" fill="none" stroke="#c41e2a" stroke-width="2.3"/><rect x="337" y="82" width="1" height="28" fill="#c8c8c8"/><polygon points="358,86.5 360.5,88 362.5,94 362,102 358,104" fill="#c4c4c4" stroke="#5a5a5a" stroke-width="0.9"/><rect x="345.5" y="86" width="13" height="18" rx="2" fill="#dcdcdc" stroke="#5a5a5a" stroke-width="1"/><circle cx="351.5" cy="94.5" r="5.4" fill="#646464" stroke="#3a3a3a" stroke-width="0.6"/><path d="M346.1,94.5 A5.4,5.4 0 0 1 356.9,94.5 Z" fill="#ecd410"/><ellipse cx="359.5" cy="95" rx="1.6" ry="4" fill="#d8c020" stroke="#6a6a6a" stroke-width="0.6"/><polygon points="357,101.5 365,104.5 366.5,107 364,107 357,104" fill="#e8cc18" stroke="#4a4a10" stroke-width="0.8"/><path d="M358,88 A5,5 0 0 1 366,90 L364,92 M366,97 A5,5 0 0 1 358,98" fill="none" stroke="#4a80c4" stroke-width="3"/><rect x="357" y="90" width="10" height="7" fill="#5a8cd0" opacity="0.8"/><polygon points="389,86.5 391.5,88 393.5,94 393,102 389,104" fill="#c4c4c4" stroke="#5a5a5a" stroke-width="0.9"/><rect x="376.5" y="86" width="13" height="18" rx="2" fill="#dcdcdc" stroke="#5a5a5a" stroke-width="1"/><circle cx="382.5" cy="94.5" r="5.4" fill="#646464" stroke="#3a3a3a" stroke-width="0.6"/><path d="M377.1,94.5 A5.4,5.4 0 0 1 387.9,94.5 Z" fill="#ecd410"/><ellipse cx="390.5" cy="95" rx="1.6" ry="4" fill="#d8c020" stroke="#6a6a6a" stroke-width="0.6"/><polygon points="388,101.5 396,104.5 397.5,107 395,107 388,104" fill="#e8cc18" stroke="#4a4a10" stroke-width="0.8"/><line x1="377" y1="97" x2="386" y2="107" stroke="#c41e2a" stroke-width="2.4"/><line x1="386" y1="97" x2="377" y2="107" stroke="#c41e2a" stroke-width="2.4"/><polygon points="420,86.5 422.5,88 424.5,94 424,102 420,104" fill="#c4c4c4" stroke="#5a5a5a" stroke-width="0.9"/><rect x="407.5" y="86" width="13" height="18" rx="2" fill="#dcdcdc" stroke="#5a5a5a" stroke-width="1"/><circle cx="413.5" cy="94.5" r="5.4" fill="#646464" stroke="#3a3a3a" stroke-width="0.6"/><path d="M408.1,94.5 A5.4,5.4 0 0 1 418.9,94.5 Z" fill="#ecd410"/><ellipse cx="421.5" cy="95" rx="1.6" ry="4" fill="#d8c020" stroke="#6a6a6a" stroke-width="0.6"/><polygon points="419,101.5 427,104.5 428.5,107 426,107 419,104" fill="#e8cc18" stroke="#4a4a10" stroke-width="0.8"/><polyline points="408,106 408,88 428,88 428,106" fill="none" stroke="#5cb030" stroke-width="2.2"/><polyline points="408,93 417.5,85.5 428,95 417.5,106" fill="none" stroke="#c41e2a" stroke-width="2.2"/><polygon points="451,86.5 453.5,88 455.5,94 455,102 451,104" fill="#c4c4c4" stroke="#5a5a5a" stroke-width="0.9"/><rect x="438.5" y="86" width="13" height="18" rx="2" fill="#dcdcdc" stroke="#5a5a5a" stroke-width="1"/><circle cx="444.5" cy="94.5" r="5.4" fill="#646464" stroke="#3a3a3a" stroke-width="0.6"/><path d="M439.1,94.5 A5.4,5.4 0 0 1 449.9,94.5 Z" fill="#ecd410"/><ellipse cx="452.5" cy="95" rx="1.6" ry="4" fill="#d8c020" stroke="#6a6a6a" stroke-width="0.6"/><polygon points="450,101.5 458,104.5 459.5,107 457,107 450,104" fill="#e8cc18" stroke="#4a4a10" stroke-width="0.8"/><polyline points="439,93 448.5,85.5 459,95 448.5,106" fill="none" stroke="#c41e2a" stroke-width="2.2"/><polygon points="482,86.5 484.5,88 486.5,94 486,102 482,104" fill="#c4c4c4" stroke="#5a5a5a" stroke-width="0.9"/><rect x="469.5" y="86" width="13" height="18" rx="2" fill="#dcdcdc" stroke="#5a5a5a" stroke-width="1"/><circle cx="475.5" cy="94.5" r="5.4" fill="#646464" stroke="#3a3a3a" stroke-width="0.6"/><path d="M470.1,94.5 A5.4,5.4 0 0 1 480.9,94.5 Z" fill="#ecd410"/><ellipse cx="483.5" cy="95" rx="1.6" ry="4" fill="#d8c020" stroke="#6a6a6a" stroke-width="0.6"/><polygon points="481,101.5 489,104.5 490.5,107 488,107 481,104" fill="#e8cc18" stroke="#4a4a10" stroke-width="0.8"/><polyline points="470,106 470,88 490,88 490,106" fill="none" stroke="#5cb030" stroke-width="2.2"/></svg><svg class="abs" style="left:0;top:0" width="200" height="100" viewBox="0 0 200 100">
<path d="M1.4,80 L1.4,46.3 C40,45.5 100,43 140,42.2 L172,42 C178,42 180.5,44 180.5,50 L180.3,68 C180,75 174,79.5 163,80 C130,80.5 100,79 60,78.6 C30,78.5 10,80 1.4,80 Z" fill="none" stroke="#ec0c0c" stroke-width="3" stroke-linejoin="miter"/>
</svg>
<!-- left dock -->
<div class="abs" style="left:9px;top:113px;width:281px;height:503px;background:#f0f0f0"></div>
<div class="abs" style="left:9px;top:114px;width:276px;height:18px;background:#dadada;border-right:1px solid #c8c8c8;border-bottom:1px solid #c8c8c8"></div>
<div class="tx" style="left:9px;top:118px;font-size:12px;letter-spacing:-0.5px;color:#111">Tree view</div>
<svg class="abs" style="left:245px;top:114px" width="40" height="18" viewBox="245 114 40 18">
<rect x="249.5" y="121.5" width="5.5" height="5.5" fill="none" stroke="#222" stroke-width="1.3"/>
<polyline points="251.5,121.5 251.5,119.5 257,119.5 257,124.5 255,124.5" fill="none" stroke="#222" stroke-width="1.3"/>
<line x1="270.5" y1="120" x2="277.5" y2="127.5" stroke="#222" stroke-width="1.5"/><line x1="277.5" y1="120" x2="270.5" y2="127.5" stroke="#222" stroke-width="1.5"/>
</svg>
<div class="abs" style="left:0px;top:136px;width:285px;height:480px;background:#ffffff;border-right:1px solid #a0a0a0"></div>
<div class="abs" style="left:9px;top:135px;width:277px;height:1px;background:#a0a0a0"></div>
<div class="abs" style="left:218px;top:136px;width:1px;height:23px;background:#e5e5e5"></div>
<div class="tx" style="left:9px;top:141px;font-size:12px">Labels &amp; Attributes</div>
<div class="tx" style="left:223px;top:141px;font-size:12px;letter-spacing:0.1px">Description</div>
<div class="abs" style="left:9px;top:158px;width:200px;height:20px;overflow:hidden"><div class="tx" style="left:-1.2px;top:3px;font-size:12px;letter-spacing:0.18px">Application</div></div>
<div class="tx" style="left:49px;top:180px;font-size:12px;font-weight:bold;letter-spacing:-0.28px">Boolean operation in FreeCAD</div>
<div class="tx" style="left:70px;top:200px;font-size:12px;letter-spacing:-0.5px">Cube</div>
<div class="tx" style="left:70px;top:220px;font-size:12px;letter-spacing:-0.1px">Cylinder</div>
<svg class="abs" style="left:0;top:170px" width="80" height="70" viewBox="0 170 80 70">
<polyline points="9,183.5 13.5,188 18,183.5" fill="none" stroke="#404040" stroke-width="1.6"/>
<rect x="28.5" y="178.5" width="13" height="15" rx="1" fill="#f2f2f2" stroke="#9a9a9a" stroke-width="1"/>
<circle cx="33.8" cy="187" r="4.3" fill="#3e70b4" stroke="#224a80" stroke-width="0.8"/>
<circle cx="37.6" cy="182.5" r="3" fill="#d0141c" stroke="#8a0a10" stroke-width="0.6"/>
<polygon points="48.5,202.5 53,199.8 62,199.8 56.2,202.5" fill="#7aa8e0" stroke="#2a4f88" stroke-width="0.7"/>
<polygon points="48.5,202.5 56.2,202.5 56.2,212.5 48.5,211" fill="#4a80c4" stroke="#2a4f88" stroke-width="0.7"/>
<polygon points="56.2,202.5 62,199.8 62,209.5 56.2,212.5" fill="#2f5f9e" stroke="#2a4f88" stroke-width="0.7"/>
<line x1="56.2" y1="202" x2="56.2" y2="212.5" stroke="#c41e2a" stroke-width="1.3"/>
<polyline points="48.5,211 56.2,212.5 62,209.5" fill="none" stroke="#c41e2a" stroke-width="1.1"/>
<circle cx="48.8" cy="211" r="1.5" fill="#c41e2a"/><circle cx="56.2" cy="212.5" r="1.5" fill="#c41e2a"/><circle cx="61.8" cy="209.5" r="1.5" fill="#c41e2a"/>
<path d="M48.5,221 L48.5,230.5 A6.5,2.4 0 0 0 61.5,230.5 L61.5,221 Z" fill="#3f72b8" stroke="#2a4f88" stroke-width="0.8"/>
<ellipse cx="55" cy="221" rx="6.5" ry="2.4" fill="#6a9ad8" stroke="#2a4f88" stroke-width="0.8"/><path d="M48.5,221 A6.5,2.4 0 0 0 61.5,221" fill="none" stroke="#c41e2a" stroke-width="1.2"/><circle cx="48.8" cy="221" r="1.5" fill="#c41e2a"/><circle cx="55" cy="223.3" r="1.4" fill="#c41e2a"/><circle cx="61.3" cy="221" r="1.5" fill="#c41e2a"/>
<line x1="61.5" y1="221" x2="61.5" y2="231" stroke="#c41e2a" stroke-width="1.3"/>
</svg>
<div id="view">
<svg width="757" height="503" viewBox="290 113 757 503" style="position:absolute;left:0;top:0">
  <defs>
    <linearGradient id="cyl" x1="576" x2="706" y1="0" y2="0" gradientUnits="userSpaceOnUse">
      <stop offset="0" stop-color="#383838"/>
      <stop offset="0.04" stop-color="#6a6a6a"/>
      <stop offset="0.12" stop-color="#9c9c9c"/>
      <stop offset="0.25" stop-color="#c8c8c8"/>
      <stop offset="0.45" stop-color="#e2e2e2"/>
      <stop offset="0.56" stop-color="#e4e4e4"/>
      <stop offset="0.7" stop-color="#d0d0d0"/>
      <stop offset="0.84" stop-color="#aaaaaa"/>
      <stop offset="0.92" stop-color="#858585"/>
      <stop offset="1" stop-color="#484848"/>
    </linearGradient>
  </defs>
  <polygon points="688,197 995,374 688,551 382,374" fill="#9d9d9d"/>
  <polygon points="382,374 688,551 688,587 382,410" fill="#a3a3a3"/>
  <polygon points="688,551 995,374 995,410 688,587" fill="#a3a3a3"/>
  <g fill="none" stroke="#0a0a0a" stroke-width="1.45" stroke-linejoin="round">
    <polygon points="688,197 995,374 995,410 688,587 382,410 382,374"/>
    <polyline points="382,374 688,551 995,374"/>
    <line x1="688" y1="551" x2="688" y2="587"/>
  </g>
  <path d="M576,272 L576,375 A65,37 0 0 0 706,375 L706,272 Z" fill="url(#cyl)"/>
  <ellipse cx="641" cy="272" rx="65" ry="37" fill="#9d9d9d" stroke="#0a0a0a" stroke-width="1.45"/>
  <line x1="687" y1="300" x2="687" y2="401" stroke="#0a0a0a" stroke-width="1.3"/>
</svg>
</div>
</body></html>
